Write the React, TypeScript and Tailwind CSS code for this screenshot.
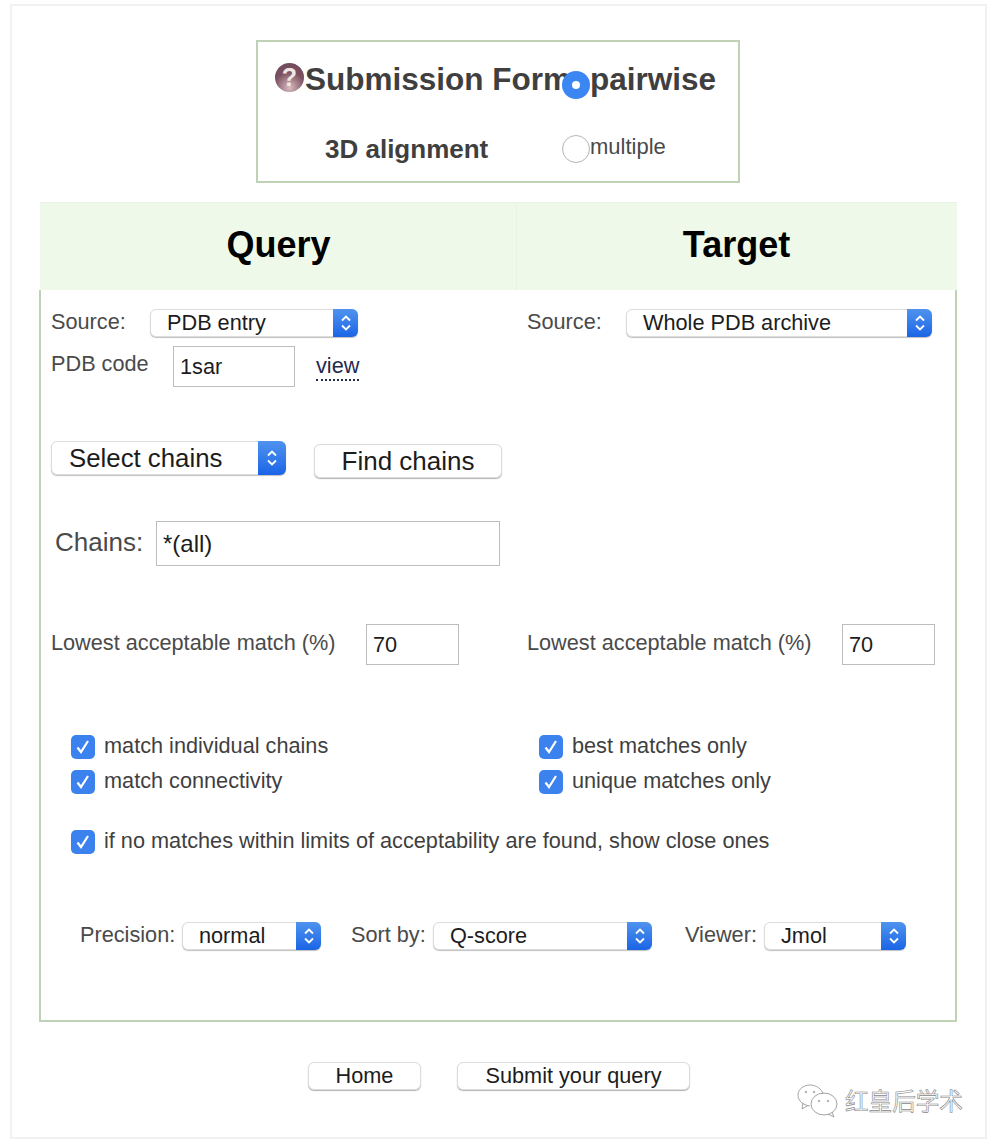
import { ReactNode } from 'react'

const Chevrons = () => (
  <svg width="12" height="20" viewBox="0 0 12 20" fill="none" stroke="white" strokeWidth="1.8">
    <path d="M2 7.5 L6 3.5 L10 7.5" />
    <path d="M2 12.5 L6 16.5 L10 12.5" />
  </svg>
)

const Select = ({ label, className, text, arrow = 'w-[25px]' }: { label: string; className: string; text: string; arrow?: string }) => (
  <div className={`flex items-stretch rounded-[6px] bg-white border border-[#dcdcdc] shadow-[0_1px_1px_rgba(0,0,0,0.25)] text-[#1c1c1c] ${className} ${text}`}>
    <div className="flex-1 flex items-center">{label}</div>
    <div className={`flex items-center justify-center rounded-r-[6px] bg-gradient-to-b from-[#4f93ee] to-[#1a64e6] -my-px -mr-px ${arrow}`}>
      <Chevrons />
    </div>
  </div>
)

const Field = ({ value, className }: { value: string; className: string }) => (
  <input
    readOnly
    value={value}
    className={`border border-[#bdbdbd] bg-white text-[#1c1c1c] outline-none ${className}`}
  />
)

const Button = ({ children, className }: { children: ReactNode; className: string }) => (
  <button className={`flex items-center justify-center rounded-[6px] bg-white border border-[#dcdcdc] shadow-[0_1px_1px_rgba(0,0,0,0.3)] text-[#1c1c1c] ${className}`}>
    {children}
  </button>
)

const Check = ({ label }: { label: string }) => (
  <div className="flex items-center gap-[9px] h-[24px]">
    <div className="w-[24px] h-[24px] rounded-[5px] bg-[#3b82ee] flex items-center justify-center">
      <svg width="18" height="18" viewBox="0 0 18 18" fill="none" stroke="white" strokeWidth="2.2">
        <path d="M3.5 9.5 L7 14 L14 3" />
      </svg>
    </div>
    <span className="text-[21.7px] leading-none text-[#3f3f3f] -mt-[3px] whitespace-nowrap">{label}</span>
  </div>
)

const App = () => {
  return (
    <div className="w-[996px] h-[1146px] bg-white pt-[4px] pl-[10px] font-['Liberation_Sans',Arial,sans-serif]">
      <div className="w-[977px] h-[1135px] border-2 border-[#f1f1f1] pt-[34px] pl-[28px] relative">
        {/* Title box */}
        <div className="ml-[216px] w-[484px] h-[143px] border-2 border-[#bfd2b5] relative">
          <div className="flex items-center pl-[17px] pt-[22px]">
            <div className="self-start -mt-px mr-px w-[29px] h-[29px] rounded-full bg-[radial-gradient(circle_at_50%_85%,#d8bcc0,#7b5060_55%,#6d4a5c)] flex items-center justify-center text-[#f1e6e4] font-bold text-[25px] leading-none">?</div>
            <span className="text-[31.5px] font-bold text-[#3f3f3f] leading-none w-[285px] whitespace-nowrap">Submission Form</span>
            <span className="text-[31.5px] font-bold text-[#3f3f3f] leading-none whitespace-nowrap">pairwise</span>
          </div>
          <div className="absolute left-[304px] top-[29px] w-[28px] h-[28px] rounded-full bg-[#3a86f2] flex items-center justify-center">
            <div className="w-[8px] h-[8px] rounded-full bg-white" />
          </div>
          <div className="flex items-center pt-[39px]">
            <span className="ml-[67px] w-[237px] text-[26px] font-bold text-[#3f3f3f] leading-none">3D alignment</span>
            <div className="w-[28px] h-[28px] rounded-full border border-[#b5b5b5] bg-white" />
            <span className="text-[22px] text-[#4a4a4a] leading-none -mt-[3px]">multiple</span>
          </div>
        </div>

        {/* Query / Target header */}
        <div className="mt-[19px] w-[917px] h-[88px] flex bg-[#eef9e9] border-t border-[#e9f0e5]">
          <div className="w-[476px] pb-[3px] pl-[1px] flex items-center justify-center text-[36px] font-bold text-black">Query</div>
          <div className="flex-1 pb-[3px] pr-[1px] flex items-center justify-center text-[36px] font-bold text-black border-l border-[#e7f3e2]">Target</div>
        </div>

        {/* Main panel */}
        <div className="-ml-px w-[918px] h-[732px] border-2 border-t-0 border-[#bfd2b5] flex flex-col pl-[10px]">
          <div className="flex mt-[19px]">
            <div className="w-[476px]">
              <div className="flex items-center">
                <span className="w-[99px] text-[21.7px] leading-none text-[#4a4a4a] -mt-[3px]">Source:</span>
                <Select label="PDB entry" className="w-[208px] h-[28px]" text="text-[21.7px] pl-[16px]" />
              </div>
              <div className="flex items-center mt-[9px]">
                <span className="w-[122px] text-[21.7px] leading-none text-[#4a4a4a] -mt-[6px]">PDB code</span>
                <Field value="1sar" className="w-[122px] h-[41px] px-[6px] text-[21.7px]" />
                <span className="ml-[21px] text-[21.7px] leading-[26px] text-[#1f2a4d] border-b-2 border-dotted border-[#1f2a4d]">view</span>
              </div>
              <div className="flex items-start mt-[54px]">
                <Select label="Select chains" className="w-[235px] h-[34px]" text="text-[25.8px] pl-[17px]" arrow="w-[28px]" />
                <Button className="ml-[28px] mt-[3px] pt-[1px] w-[188px] h-[34px] text-[26px]">Find chains</Button>
              </div>
              <div className="flex items-center mt-[43px]">
                <span className="ml-[4px] w-[101px] text-[26px] leading-none text-[#4a4a4a] -mt-[4px]">Chains:</span>
                <Field value="*(all)" className="w-[344px] h-[45px] px-[6px] text-[24px]" />
              </div>
            </div>
            <div className="flex items-start">
              <span className="w-[99px] text-[21.7px] leading-none text-[#4a4a4a] mt-[2px]">Source:</span>
              <Select label="Whole PDB archive" className="w-[306px] h-[28px]" text="text-[21.7px] pl-[16px]" />
            </div>
          </div>

          <div className="flex mt-[58px]">
            <div className="w-[476px] flex items-center">
              <span className="w-[315px] text-[21.7px] leading-none text-[#4a4a4a] whitespace-nowrap -mt-[3px]">Lowest acceptable match (%)</span>
              <Field value="70" className="w-[93px] h-[41px] px-[6px] text-[21.7px]" />
            </div>
            <div className="flex items-center">
              <span className="w-[315px] text-[21.7px] leading-none text-[#4a4a4a] whitespace-nowrap -mt-[3px]">Lowest acceptable match (%)</span>
              <Field value="70" className="w-[93px] h-[41px] px-[6px] text-[21.7px]" />
            </div>
          </div>

          <div className="flex mt-[70px]">
            <div className="w-[488px] pl-[20px] flex flex-col gap-[11px]">
              <Check label="match individual chains" />
              <Check label="match connectivity" />
            </div>
            <div className="flex flex-col gap-[11px]">
              <Check label="best matches only" />
              <Check label="unique matches only" />
            </div>
          </div>
          <div className="mt-[36px] pl-[20px]">
            <Check label="if no matches within limits of acceptability are found, show close ones" />
          </div>

          <div className="flex items-center mt-[68px] pl-[29px] text-[21.7px] leading-none text-[#4a4a4a]">
            <span className="w-[102px] -mt-[2px]">Precision:</span>
            <Select label="normal" className="w-[139px] h-[28px]" text="text-[21.7px] pl-[16px]" />
            <span className="ml-[30px] w-[82px] -mt-[2px]">Sort by:</span>
            <Select label="Q-score" className="w-[219px] h-[28px]" text="text-[21.7px] pl-[16px]" />
            <span className="ml-[33px] w-[79px] -mt-[2px]">Viewer:</span>
            <Select label="Jmol" className="w-[142px] h-[28px]" text="text-[21.7px] pl-[16px]" />
          </div>
        </div>

        {/* Actions */}
        <div className="flex mt-[40px] pl-[268px]">
          <Button className="w-[113px] h-[28px] text-[21.7px]">Home</Button>
          <Button className="ml-[36px] w-[233px] h-[28px] text-[21.7px]">Submit your query</Button>
        </div>

        {/* Watermark */}
        <div className="absolute left-[785px] top-[1078px] flex items-center gap-[6px]">
          <svg width="42" height="34" viewBox="0 0 42 34" fill="none" stroke="#9a9a9a" strokeWidth="0.9">
            <path d="M13 22 C6 21 1 17 1 11 C1 5 7 1 13 1 C19 1 25 5 26 10" />
            <path d="M6 19 L5 25 L11 21.5" />
            <ellipse cx="27" cy="20" rx="13" ry="11" />
            <path d="M35 28 L37 33 L31 30" />
            <circle cx="9" cy="8" r="0.8" />
            <circle cx="17" cy="8" r="0.8" />
            <circle cx="22" cy="17" r="0.8" />
            <circle cx="31" cy="17" r="0.8" />
          </svg>
          <span className="text-[23.6px] leading-none text-white [-webkit-text-stroke:0.6px_#858585] font-['Noto_Sans_CJK_SC',sans-serif] whitespace-nowrap">红皇后学术</span>
        </div>
      </div>
    </div>
  )
}

export default App
